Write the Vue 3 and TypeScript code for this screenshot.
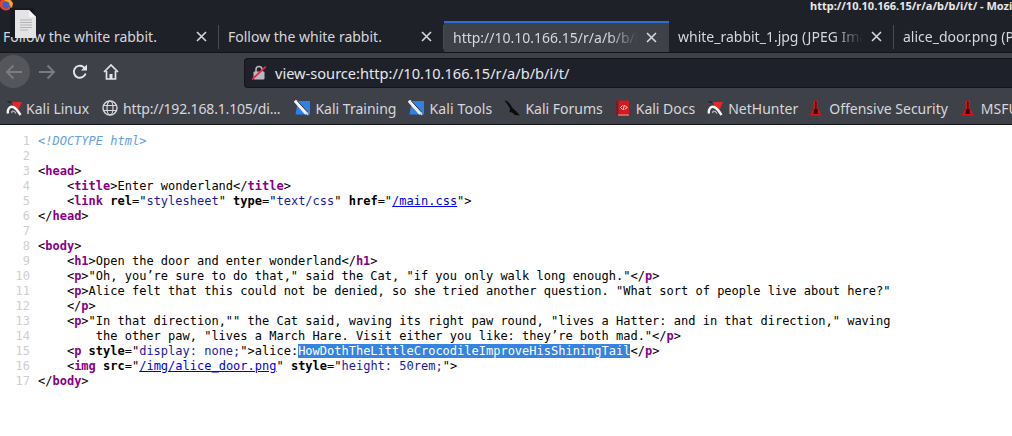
<script setup lang="ts">
type Seg = { t: string; c?: string };
const tabs = [
  { title: "Follow the white rabbit.", active: false, fade: false },
  { title: "Follow the white rabbit.", active: false, fade: false },
  { title: "http://10.10.166.15/r/a/b/b/i/t/", active: true, fade: true },
  { title: "white_rabbit_1.jpg (JPEG Image, 1080 × 1080 pixels)", active: false, fade: true },
  { title: "alice_door.png (PNG Image, 1962 × 1942 pixels)", active: false, fade: true },
];
const bookmarks = [
  { label: "Kali Linux", icon: "kali" },
  { label: "http://192.168.1.105/di...", icon: "globe" },
  { label: "Kali Training", icon: "blue" },
  { label: "Kali Tools", icon: "blue" },
  { label: "Kali Forums", icon: "forum" },
  { label: "Kali Docs", icon: "docs" },
  { label: "NetHunter", icon: "kali" },
  { label: "Offensive Security", icon: "offsec" },
  { label: "MSFU", icon: "offsec" },
];
const lines: Seg[][] = [
  [{ t: '<!DOCTYPE html>', c: "doctype" }],
  [],
  [{ t: "<" }, { t: "head", c: "tag" }, { t: ">" }],
  [{ t: "    <" }, { t: "title", c: "tag" }, { t: ">Enter wonderland</" }, { t: "title", c: "tag" }, { t: ">" }],
  [{ t: "    <" }, { t: "link", c: "tag" }, { t: " " }, { t: "rel", c: "attr" }, { t: '="' }, { t: "stylesheet", c: "val" }, { t: '" ' }, { t: "type", c: "attr" }, { t: '="' }, { t: "text/css", c: "val" }, { t: '" ' }, { t: "href", c: "attr" }, { t: '="' }, { t: "/main.css", c: "href" }, { t: '">' }],
  [{ t: "</" }, { t: "head", c: "tag" }, { t: ">" }],
  [],
  [{ t: "<" }, { t: "body", c: "tag" }, { t: ">" }],
  [{ t: "    <" }, { t: "h1", c: "tag" }, { t: ">Open the door and enter wonderland</" }, { t: "h1", c: "tag" }, { t: ">" }],
  [{ t: "    <" }, { t: "p", c: "tag" }, { t: '>"Oh, you’re sure to do that," said the Cat, "if you only walk long enough."</' }, { t: "p", c: "tag" }, { t: ">" }],
  [{ t: "    <" }, { t: "p", c: "tag" }, { t: '>Alice felt that this could not be denied, so she tried another question. "What sort of people live about here?"' }],
  [{ t: "    </" }, { t: "p", c: "tag" }, { t: ">" }],
  [{ t: "    <" }, { t: "p", c: "tag" }, { t: '>"In that direction,"" the Cat said, waving its right paw round, "lives a Hatter: and in that direction," waving' }],
  [{ t: '        the other paw, "lives a March Hare. Visit either you like: they’re both mad."</' }, { t: "p", c: "tag" }, { t: ">" }],
  [{ t: "    <" }, { t: "p", c: "tag" }, { t: " " }, { t: "style", c: "attr" }, { t: '="' }, { t: "display: none;", c: "val" }, { t: '">alice:' }, { t: "HowDothTheLittleCrocodileImproveHisShiningTail", c: "sel" }, { t: "</" }, { t: "p", c: "tag" }, { t: ">" }],
  [{ t: "    <" }, { t: "img", c: "tag" }, { t: " " }, { t: "src", c: "attr" }, { t: '="' }, { t: "/img/alice_door.png", c: "href" }, { t: '" ' }, { t: "style", c: "attr" }, { t: '="' }, { t: "height: 50rem;", c: "val" }, { t: '">' }],
  [{ t: "</" }, { t: "body", c: "tag" }, { t: ">" }],
];
</script>

<template>
  <div class="window">
    <div class="titlebar">
      <svg class="fox" width="14" height="13" viewBox="0 0 14 13">
        <circle cx="6" cy="4" r="6.5" fill="#e8432a" />
        <path d="M4 0 L9 -1 L13 3 L12 8 L8 3 Z" fill="#f9a825" />
        <circle cx="6" cy="5" r="3.4" fill="#3f5fc4" />
      </svg>
      <div class="doc-wrap">
        <svg width="21" height="28" viewBox="0 0 21 28">
          <path d="M0 0H14L21 7V28H0Z" fill="#e4e4e6" />
          <path d="M14 0L21 7H14Z" fill="#f6f6f7" />
          <path d="M5 10H17M5 12.5H17M5 15H17M5 17.5H17M5 20H13" stroke="#b3b3b6" stroke-width="1" />
        </svg>
      </div>
      <span class="win-title">http://10.10.166.15/r/a/b/b/i/t/ - Mozilla Firefox</span>
    </div>

    <div class="tabstrip">
      <div v-for="(tab, i) in tabs" :key="i" class="tab" :class="{ active: tab.active, fade: tab.fade }">
        <span class="tab-title">{{ tab.title }}</span>
        <svg class="tab-close" width="11" height="11" viewBox="0 0 11 11">
          <path d="M1 1L10 10M10 1L1 10" stroke="#d6d7da" stroke-width="1.6" />
        </svg>
      </div>
    </div>

    <div class="navbar">
      <div class="back">
        <svg width="18" height="16" viewBox="0 0 18 16"><path d="M17 8H2M8.5 1.5L2 8L8.5 14.5" fill="none" stroke="#7b7c82" stroke-width="1.9" /></svg>
      </div>
      <svg class="forward" width="18" height="16" viewBox="0 0 18 16"><path d="M1 8H16M9.5 1.5L16 8L9.5 14.5" fill="none" stroke="#7b7c82" stroke-width="1.9" /></svg>
      <svg class="reload" width="16" height="16" viewBox="0 0 16 16"><path d="M13.6 9.5A6 6 0 1 1 11.5 3L13.5 4.5" fill="none" stroke="#e4e5e8" stroke-width="1.9" /><path d="M15 0.5V6.5H9Z" fill="#e4e5e8" /></svg>
      <svg class="home" width="16" height="16" viewBox="0 0 16 16"><path d="M1 8L8 1L15 8M3.5 7V15H12.5V7" fill="none" stroke="#e4e5e8" stroke-width="1.7" /><rect x="6.5" y="10" width="3" height="5" fill="#e4e5e8" /></svg>
      <div class="urlbar">
        <svg class="lock" width="14" height="15" viewBox="0 0 14 15">
          <path d="M4 7V4.5A3 3 0 0 1 10 4.5V7" fill="none" stroke="#b8b9bc" stroke-width="1.6" />
          <rect x="1.5" y="6.5" width="11" height="8" rx="1" fill="#b8b9bc" />
          <path d="M0 14.5L14 1.5" stroke="#e22850" stroke-width="1.8" />
        </svg>
        <span class="url">view-source:http://10.10.166.15/r/a/b/b/i/t/</span>
      </div>
    </div>

    <div class="bookmarks">
      <div v-for="b in bookmarks" :key="b.label" class="bm">
        <svg class="bm-icon" width="16" height="16" viewBox="0 0 16 16">
          <template v-if="b.icon === 'kali'">
            <path d="M6 2L16 2L12 11L8 7Z" fill="#e2282e" />
            <path d="M0.5 1L4 1L6 3L3 3Z" fill="#26262a" />
            <path d="M2 13.5C1 9 4 6 7 7C10 8 12 11 14.5 15" fill="none" stroke="#f4f4f5" stroke-width="2.4" />
            <path d="M6 13C5 10.5 8 10 10 13.5" fill="none" stroke="#c9c9cc" stroke-width="1.2" />
          </template>
          <template v-else-if="b.icon === 'globe'">
            <circle cx="8" cy="8" r="7" fill="none" stroke="#d6d7da" stroke-width="1.4" />
            <ellipse cx="8" cy="8" rx="3" ry="7" fill="none" stroke="#d6d7da" stroke-width="1.2" />
            <path d="M1 5.5H15M1 10.5H15" stroke="#d6d7da" stroke-width="1.2" />
          </template>
          <template v-else-if="b.icon === 'blue'">
            <path d="M4 1H16V14.5H1.5Z" fill="#2d82ea" />
            <path d="M1 0.5L12.5 13.5" stroke="#f2f2f3" stroke-width="3.4" />
            <path d="M3 0.5L13.5 12" stroke="#2a2a2e" stroke-width="1" />
            <path d="M12 12.5L14 15" stroke="#d8d8da" stroke-width="1.6" />
          </template>
          <template v-else-if="b.icon === 'forum'">
            <path d="M0.5 0.5L3 1L6 4L9 8.5L12 11L16 15.5L11 15L8 12.5L5.5 12L6 8.5L3.5 4.5Z" fill="#0c0c0e" />
          </template>
          <template v-else-if="b.icon === 'docs'">
            <rect x="1" y="0.5" width="13" height="15" rx="1" fill="#d41a1f" />
            <rect x="1" y="0.5" width="2.5" height="15" fill="#6e2226" />
            <rect x="3" y="14.5" width="11" height="1" fill="#e8a0a0" />
            <path d="M7.5 5.5L5.5 7.5L7.5 9.5M10 5.5L12 7.5L10 9.5M9.3 5L8.2 10" fill="none" stroke="#fff" stroke-width="1" />
          </template>
          <template v-else>
            <path d="M5.5 0.5H10V8L14 15.5H1.5L5.5 8Z" fill="#d0141b" />
            <path d="M7 1.5H8.5V9H9.5L10 14H5.5L6 9H7Z" fill="#3a0608" />
          </template>
        </svg>
        <span class="bm-label">{{ b.label }}</span>
      </div>
    </div>

    <div class="source">
      <div v-for="(line, i) in lines" :key="i" class="line">
        <span class="num">{{ i + 1 }}</span>
        <span class="code"><span v-for="(s, j) in line" :key="j" :class="s.c">{{ s.t }}</span></span>
      </div>
    </div>
  </div>
</template>

<style>
html, body { margin: 0; background: #fff; overflow: hidden; }
</style>

<style scoped>
.window { width: 1012px; height: 436px; overflow: hidden; background: #fff; position: relative; }
.titlebar { height: 21px; background: #1f2129; position: relative; display: flex; justify-content: flex-start; }
.fox { position: absolute; left: 0; top: 0; }
.doc-wrap { position: absolute; left: 10px; top: 8px; width: 24px; height: 29px; background: #181a20; z-index: 3; display: flex; justify-content: flex-end; }
.doc-wrap svg { margin-top: 2px; margin-right: -2px; }
.win-title { margin-left: 810px; font: 700 11px/11px "Noto Sans", sans-serif; color: #e8e8ea; white-space: nowrap; }
.tabstrip { height: 31px; background: #1f2129; display: flex; margin-left: -6px; }
.tab { flex: 0 0 225px; width: 225px; min-width: 0; box-sizing: border-box; height: 31px; display: flex; align-items: center; padding: 0 10px 0 9px; position: relative; color: #d6d7da; font: 14px "Noto Sans", sans-serif; }
.tab::after { content: ""; position: absolute; right: 0; top: 4px; height: 24px; width: 1px; background: #4a4b52; }
.tab.active { background: #3f4149; border-top: 2px solid #2a6fd8; }
.tab.active::after { display: none; }
.tab-title { flex: 1; min-width: 0; overflow: hidden; white-space: nowrap; }
.tab.fade .tab-title { -webkit-mask-image: linear-gradient(90deg, #000 84%, transparent 100%); mask-image: linear-gradient(90deg, #000 84%, transparent 100%); }
.tab-close { flex: none; margin-left: 8px; margin-right: 2px; }
.navbar { height: 36px; background: #3f4149; border-top: 1px solid #141519; box-sizing: border-box; display: flex; align-items: center; position: relative; }
.back { width: 33px; height: 33px; border-radius: 50%; background: #55565c; margin-left: -3px; margin-top: 2px; display: flex; align-items: center; justify-content: center; flex: none; }
.forward { margin-left: 8px; flex: none; margin-top: 2px; }
.reload { margin-left: 16px; flex: none; margin-top: 2px; }
.home { margin-left: 15px; flex: none; margin-top: 2px; }
.urlbar { margin-left: 125px; margin-top: 4px; flex: 1; height: 30px; box-sizing: border-box; background: #1f212a; border: 1px solid #141519; border-right: 0; border-radius: 4px 0 0 4px; display: flex; align-items: center; padding-left: 7px; color: #e6e7ea; }
.lock { flex: none; }
.url { margin-left: 9px; font: 14.6px "Noto Sans", sans-serif; white-space: nowrap; }
.bookmarks { height: 37px; background: #3f4149; border-bottom: 1px solid #141519; box-sizing: border-box; display: flex; align-items: center; padding: 4px 0 0 6px; gap: 12px; color: #d6d7da; font: 14px "Noto Sans", sans-serif; white-space: nowrap; overflow: hidden; }
.bm { display: flex; align-items: center; gap: 5px; flex: none; }
.bm-icon { flex: none; }
.bm:nth-child(1) { gap: 4px; margin-right: 1px; }
.bm:nth-child(2) .bm-label { letter-spacing: -0.16px; }
.bm:nth-child(3) { margin-left: 2px; }
.bm:nth-child(4) .bm-label { letter-spacing: 0.15px; }
.bm:nth-child(8) { margin-left: -2px; }
.source { padding-top: 9px; font: 12px/15px "DejaVu Sans Mono", monospace; color: #000; }
.line { display: flex; height: 15px; }
.num { width: 30px; text-align: right; color: #cfcfcf; flex: none; }
.code { margin-left: 8px; white-space: pre; }
.tag { color: #880088; font-weight: 700; }
.attr { font-weight: 700; color: #000; }
.val { color: #1a1aa6; }
.href { color: #0000ee; text-decoration: underline; }
.doctype { color: #5f9fdc; font-style: italic; }
.sel { background: #3584e4; color: #fff; }
</style>
